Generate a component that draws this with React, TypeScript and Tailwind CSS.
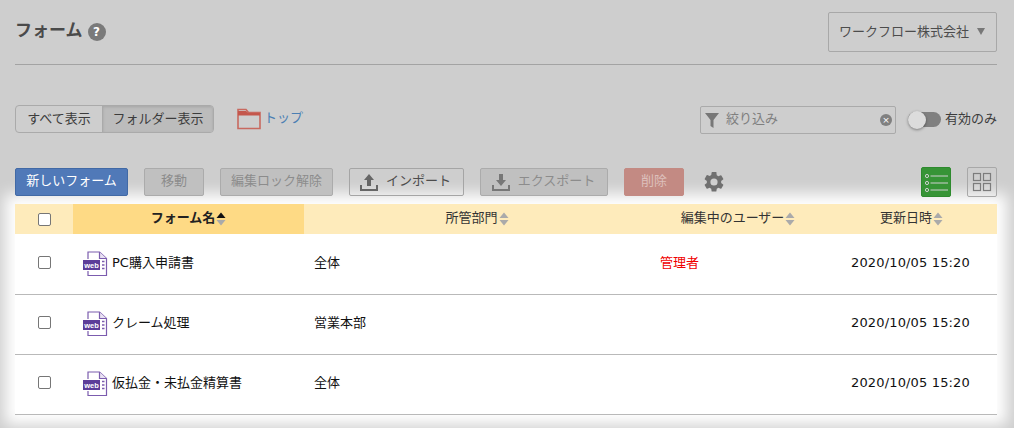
import React from "react";

const font = { fontFamily: '"DejaVu Sans", "Noto Sans CJK JP", sans-serif' };

function Sort({ active }: { active?: boolean }) {
  return (
    <svg width="10" height="14" viewBox="0 0 10 14" className="ml-[1px] shrink-0">
      <path d="M5 0.5 L9.5 6 L0.5 6 Z" fill={active ? "#111" : "#aaa"} />
      <path d="M5 13.5 L9.5 8 L0.5 8 Z" fill="#aaa" />
    </svg>
  );
}

function WebIcon() {
  return (
    <svg width="26" height="26" viewBox="0 0 26 26" className="shrink-0 -mt-[2px]">
      <path d="M6 8 V1 H17.5 L24.5 7.5 V24.5 H6 V20" fill="#fff" stroke="#7b5cae" strokeWidth="1.2" />
      <path d="M17.5 1 V7.5 H24.5" fill="#e9e2f3" stroke="#7b5cae" strokeWidth="1.2" />
      <rect x="1" y="9" width="17" height="10" fill="#5c3d99" />
      <text x="9.5" y="16.7" textAnchor="middle" fontSize="7.5" fontWeight="700" fill="#fff" fontFamily="Liberation Sans, sans-serif">web</text>
      <path d="M20 10.5 H22.5 M20 14 H22.5 M20 17.5 H22.5" stroke="#7b5cae" strokeWidth="1.4" />
    </svg>
  );
}

function Check() {
  return <span className="block w-[13px] h-[13px] rounded-[2px] border border-[#767676] bg-white" />;
}

function Row({ name, dept, user }: { name: string; dept: string; user?: string }) {
  return (
    <div className="grid grid-cols-[58px_231px_346px_176px_171px] h-[60px] items-center border-b border-[#b9b9b9] text-[13px] text-[#111]">
      <div className="flex justify-center -mt-[4px]"><Check /></div>
      <div className="flex items-center gap-[4px] pl-[9px]"><WebIcon /><span className="-mt-[4px]">{name}</span></div>
      <div className="pl-[10px] -mt-[4px]">{dept}</div>
      <div className="pl-[10px] -mt-[4px] text-[#f00000]">{user}</div>
      <div className="text-center -mt-[4px] pr-[2px] tracking-[0.15px]">2020/10/05 15:20</div>
    </div>
  );
}

const btn = "h-[28px] flex items-center justify-center rounded-[2px] border text-[13px] pb-[2px]";

export default function App() {
  return (
    <div style={font} className="relative w-[1014px] h-[428px] overflow-hidden bg-[#cecece] text-[#3c3c3c]">
      <div className="pl-[15px] pr-[17px]">
        <div className="h-[65px] border-b border-[#a3a3a3] flex justify-between pt-[12px]">
          <div className="flex items-start gap-[5px] pt-[5px]">
            <span className="text-[17px] font-bold leading-[26px] text-[#4a4a4a]">フォーム</span>
            <span className="mt-[6px] w-[18px] h-[18px] rounded-full bg-[#7a7a7a] text-white text-[12px] font-bold flex items-center justify-center">?</span>
          </div>
          <div className="w-[169px] h-[40px] border border-[#a8a8a8] rounded-[2px] flex items-center justify-between pl-[10px] pr-[11px] pb-[1px] text-[13px] text-[#4c4c4c]">
            <span>ワークフロー株式会社</span>
            <svg width="8" height="7" viewBox="0 0 8 7"><path d="M0 0H8L4 7Z" fill="#777" /></svg>
          </div>
        </div>

        <div className="flex items-center justify-between mt-[40px] h-[30px]">
          <div className="flex items-center">
            <div className="flex h-[28px] w-[199px] -mt-[2px] rounded-[4px] border border-[#aaaaaa] text-[13px] overflow-hidden">
              <div className="w-[86px] flex items-center justify-center pb-[1px]">すべて表示</div>
              <div className="flex-1 flex items-center justify-center pb-[1px] bg-[#bcbcbc] border-l border-[#aaaaaa] shadow-[inset_0_1px_3px_rgba(0,0,0,0.12)]">フォルダー表示</div>
            </div>
            <svg width="24" height="22" viewBox="0 0 24 22" className="ml-[23px] -mt-[2px]">
              <path d="M1 20.5 V1.5 H9 L11.5 4.5 H23 V20.5 Z" fill="none" stroke="#c8695f" strokeWidth="1.6" />
              <path d="M1 3 H9 L11.5 5 H23 V7.5 H1 Z" fill="#c4574c" />
            </svg>
            <span className="ml-[3px] -mt-[4px] text-[13px] text-[#4b7fb3]">トップ</span>
          </div>
          <div className="flex items-center">
            <div className="w-[196px] h-[28px] border border-[#aaaaaa] rounded-[2px] flex items-center pl-[4px] pr-[3px] text-[13px] text-[#7f7f7f]">
              <svg width="14" height="15" viewBox="0 0 14 15" className="shrink-0"><path d="M0 0H14L8.5 7V15L5.5 13V7Z" fill="#777" /></svg>
              <span className="ml-[7px] flex-1 -mt-[2px]">絞り込み</span>
              <span className="w-[12px] h-[12px] rounded-full bg-[#808080] text-white text-[9px] leading-none flex items-center justify-center">×</span>
            </div>
            <div className="relative ml-[12px] -mt-[1px] w-[33px] h-[15px] rounded-full bg-[#808080]">
              <span className="absolute left-0 -top-[1.5px] w-[18px] h-[18px] rounded-full bg-[#dcdcdc] shadow-[0_1px_3px_rgba(0,0,0,0.4)]" />
            </div>
            <span className="ml-[4px] -mt-[3px] w-[52px] whitespace-nowrap text-[13px]">有効のみ</span>
          </div>
        </div>

        <div className="flex items-center mt-[32px] h-[30px]">
          <div className={`${btn} w-[113px] bg-[#5079b8] border-[#4169a5] text-white`}>新しいフォーム</div>
          <div className={`${btn} w-[60px] ml-[16px] bg-[#c0c0c0] border-[#ababab] text-[#8c8c8c]`}>移動</div>
          <div className={`${btn} w-[113px] ml-[16px] bg-[#c0c0c0] border-[#ababab] text-[#8c8c8c]`}>編集ロック解除</div>
          <div className={`${btn} w-[115px] ml-[16px] border-[#a5a5a5] text-[#4c4c4c] gap-[8px] pr-[2px]`}>
            <svg width="18" height="17" viewBox="0 0 18 17" className="mt-[2px]"><path d="M9 0L14 6H11V12H7V6H4Z" fill="#666" /><path d="M1 11V16H17V11" fill="none" stroke="#666" strokeWidth="2" /></svg>
            <span>インポート</span>
          </div>
          <div className={`${btn} w-[128px] ml-[16px] bg-[#c0c0c0] border-[#ababab] text-[#8c8c8c] gap-[8px] pr-[1px]`}>
            <svg width="18" height="17" viewBox="0 0 18 17" className="mt-[2px]"><path d="M7 0H11V6H14L9 12L4 6H7Z" fill="#777" /><path d="M1 11V16H17V11" fill="none" stroke="#777" strokeWidth="2" /></svg>
            <span>エクスポート</span>
          </div>
          <div className={`${btn} w-[60px] ml-[16px] bg-[#c38a83] border-[#c38a83] text-[#ddc0bc]`}>削除</div>
          <svg width="24" height="24" viewBox="0 0 24 24" className="ml-[18px]">
            <path fill="#707070" d="M19.14 12.94c.04-.3.06-.61.06-.94s-.02-.64-.07-.94l2.03-1.58a.49.49 0 0 0 .12-.61l-1.92-3.32a.49.49 0 0 0-.59-.22l-2.39.96a7 7 0 0 0-1.62-.94l-.36-2.54A.48.48 0 0 0 13.92 2h-3.84a.48.48 0 0 0-.47.41l-.36 2.54a7.3 7.3 0 0 0-1.62.94l-2.39-.96a.48.48 0 0 0-.59.22L2.73 8.87a.48.48 0 0 0 .12.61l2.03 1.58c-.05.3-.08.63-.08.94s.02.64.07.94l-2.03 1.58a.49.49 0 0 0-.12.61l1.92 3.32c.12.22.37.29.59.22l2.39-.96c.5.38 1.03.7 1.62.94l.36 2.54c.05.24.24.41.48.41h3.84c.24 0 .44-.17.47-.41l.36-2.54a7 7 0 0 0 1.62-.94l2.39.96c.22.08.47 0 .59-.22l1.92-3.32a.48.48 0 0 0-.12-.61zM12 15.6A3.6 3.6 0 1 1 12 8.4a3.6 3.6 0 0 1 0 7.2z" />
          </svg>
          <div className="ml-auto w-[30px] h-[30px] rounded-[2px] bg-[#379436] border border-[#2e8a2e] flex items-center justify-center">
            <svg width="24" height="24" viewBox="0 0 24 24" stroke="#cfcfcf" strokeWidth="1" fill="none">
              <circle cx="3" cy="6" r="1.6" /><circle cx="3" cy="13" r="1.6" /><circle cx="3" cy="20" r="1.6" />
              <path d="M6.5 6H24M6.5 13H24M6.5 20H24" />
            </svg>
          </div>
          <div className="ml-[16px] w-[30px] h-[30px] rounded-[2px] border border-[#a8a8a8] flex items-center justify-center">
            <svg width="20" height="20" viewBox="0 0 20 20" stroke="#7c7c7c" strokeWidth="1.2" fill="none">
              <rect x="1.5" y="1.5" width="7" height="7" /><rect x="11.5" y="1.5" width="7" height="7" /><rect x="1.5" y="11.5" width="7" height="7" /><rect x="11.5" y="11.5" width="7" height="7" />
            </svg>
          </div>
        </div>

        <div className="mt-[7px] bg-white h-[211px] shadow-[0_0_14px_10px_#ffffff]">
          <div className="grid grid-cols-[58px_231px_346px_176px_171px] h-[30px] items-center bg-[#feebbb] text-[13px] text-[#333]">
            <div className="flex justify-center"><Check /></div>
            <div className="h-full bg-[#feda85] flex items-center justify-center font-bold text-[#222]"><span className="-mt-[2px]">フォーム名</span><Sort active /></div>
            <div className="flex items-center justify-center"><span className="-mt-[2px]">所管部門</span><Sort /></div>
            <div className="flex items-center justify-center"><span className="-mt-[2px]">編集中のユーザー</span><Sort /></div>
            <div className="flex items-center justify-center"><span className="-mt-[2px]">更新日時</span><Sort /></div>
          </div>
          <div className="pt-[1px]">
            <Row name="PC購入申請書" dept="全体" user="管理者" />
            <Row name="クレーム処理" dept="営業本部" />
            <Row name="仮払金・未払金精算書" dept="全体" />
          </div>
        </div>
      </div>
    </div>
  );
}
